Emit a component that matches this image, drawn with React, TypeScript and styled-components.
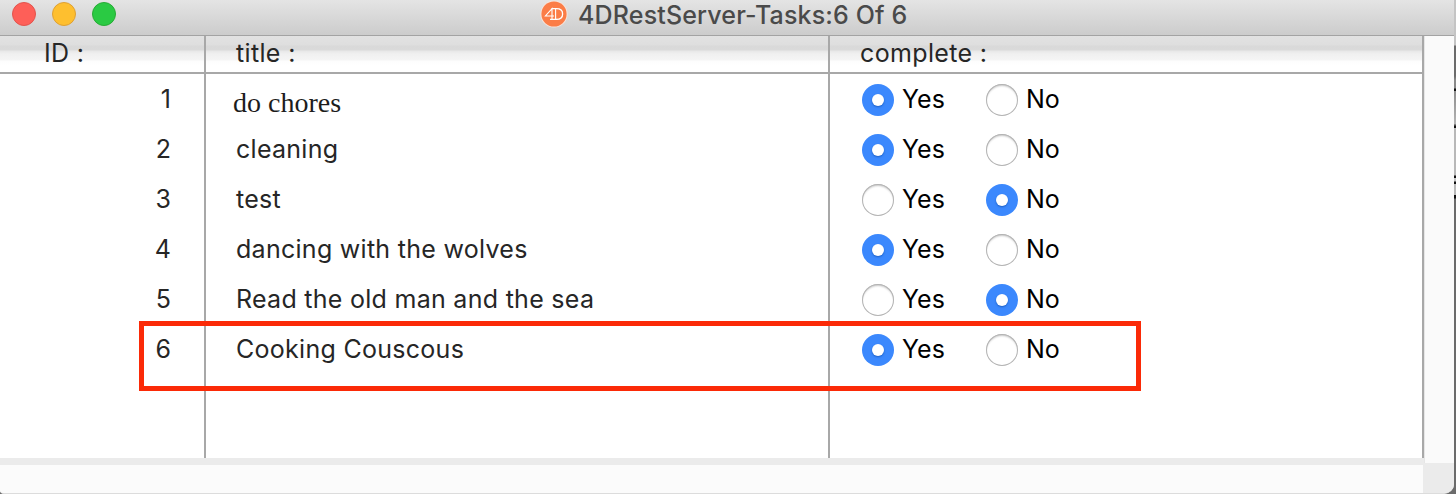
import React from "react";
import styled, { createGlobalStyle, css } from "styled-components";

const GlobalStyle = createGlobalStyle`
  *, *::before, *::after { box-sizing: border-box; }
  body { margin: 0; background: #6f6f6f; overflow: hidden; }
`;

const Desktop = styled.div`
  width: 1456px;
  height: 494px;
  padding-right: 2px;
  overflow: hidden;
  background: linear-gradient(
    #c4c4c4 0 45px, #6b6b6b 46px 76px, #8a8a8a 80px 88px, #111 89px 91px,
    #8d8d8d 91px, #b4b4b4 124px, #444 125px 126px, #111 126px 128px, #b8b8b8 128px 175px,
    #111 176px 178px, #c4c4c4 178px 181px, #111 182px 184px, #b8b8b8 184px 195px,
    #111 195px 198px, #6b6b6b 199px
  );
`;

const Window = styled.main`
  position: relative;
  display: flex;
  flex-direction: column;
  height: 494px;
  border-bottom: 1px solid #dcdcdc;
  border-radius: 0 0 10px 4px;
  overflow: hidden;
  background: #fff;
  color: #262626;
  font: 400 25px/48px Inter, "Liberation Sans", sans-serif;
  white-space: nowrap;
`;

const TitleBar = styled.header`
  position: relative;
  flex: none;
  display: flex;
  justify-content: center;
  height: 36px;
  border-bottom: 1px solid #a3a3a3;
  background: linear-gradient(#e4e4e4, #cccccc);
`;

const WindowControls = styled.div`
  position: absolute;
  left: 12px;
  top: 2px;
  display: flex;
  gap: 16px;
`;

const Control = styled.span<{ $fill: string; $edge: string }>`
  width: 24px;
  height: 24px;
  border: 1px solid ${(p) => p.$edge};
  border-radius: 50%;
  background: ${(p) => p.$fill};
`;

const Title = styled.h1`
  display: flex;
  gap: 10px;
  width: 374px;
  height: 30px;
  margin: 0;
  color: #4a4a4a;
  font-size: 25px;
  font-weight: 500;
  line-height: 30px;
  letter-spacing: 0.16px;
`;

const AppLogo = styled.svg`
  flex: none;
  width: 28px;
  height: 28px;
`;

const Content = styled.div`
  flex: none;
  display: flex;
  height: 427px;
`;

const Main = styled.div`
  width: 1424px;
  background: #ebebeb;
`;

const List = styled.section`
  display: flex;
  height: 422px;
  background: #fff;
`;

const Column = styled.div<{ $width: number }>`
  width: ${(p) => p.$width}px;
  border-right: 2px solid #a8a8a8;
`;

const ColumnHeader = styled.div<{ $indent: number }>`
  height: 38px;
  margin-bottom: 1px;
  padding-left: ${(p) => p.$indent}px;
  border-bottom: 2px solid #a8a8a8;
  background: linear-gradient(
    #e2e2e2 0, #dedede 9px, #d9d9d9 10px, #dadada 14px, #e8e8e8 15px,
    #f0f0f0 18px, #f5f5f5 24px, #fdfdfd 25px, #fff 30px
  );
  line-height: 35px;
  letter-spacing: 0.35px;
`;

const IdCell = styled.div`
  height: 50px;
  padding-right: 33px;
  text-align: right;
`;

const TitleCell = styled.div<{ $serif?: boolean }>`
  height: 50px;
  padding-left: 30px;
  letter-spacing: 0.28px;
  ${(p) =>
    p.$serif &&
    css`
      padding-left: 27px;
      color: #1c1c1c;
      font-family: "Liberation Serif", serif;
      font-size: 28px;
      line-height: 55px;
      letter-spacing: 0;
    `}
`;

const RadioCell = styled.div`
  display: flex;
  height: 50px;
  padding-left: 32px;
  color: #000;
`;

const Option = styled.label`
  display: flex;
  gap: 8px;
  width: 124px;
`;

const Dot = styled.span<{ $on: boolean }>`
  display: grid;
  place-items: center;
  width: 32px;
  height: 32px;
  margin-top: 9px;
  border-radius: 50%;
  background: #fff;
  box-shadow: inset 0 0 0 1px #b4b4b4, inset 0 2px 2px #c8c8c8;
  ${(p) =>
    p.$on &&
    css`
      background: #3b88fd;
      box-shadow: none;
      &::after {
        content: "";
        width: 12px;
        height: 12px;
        border-radius: 50%;
        background: #fff;
        box-shadow: 0 1px 2px #1d5fc4;
      }
    `}
`;

const VerticalScroller = styled.div`
  width: 30px;
  border-left: 1px solid #e6e6e6;
  background: #fafafa;
`;

const BottomBar = styled.div`
  flex: 1;
  display: flex;
  padding-top: 2px;
  background: #ebebeb;
`;

const HorizontalScroller = styled.div`
  width: 1423px;
  background: #fbfbfb;
`;

const Highlight = styled.div`
  position: absolute;
  left: 139px;
  top: 321px;
  width: 1002px;
  height: 70px;
  border: 5px solid #fb2a07;
`;

const tasks = [
  { id: 1, title: "do chores", complete: true, serif: true },
  { id: 2, title: "cleaning", complete: true },
  { id: 3, title: "test", complete: false },
  { id: 4, title: "dancing with the wolves", complete: true },
  { id: 5, title: "Read the old man and the sea", complete: false },
  { id: 6, title: "Cooking Couscous", complete: true },
];

export default function App() {
  return (
    <Desktop>
      <GlobalStyle />
      <Window>
        <TitleBar>
          <WindowControls>
            <Control $fill="#fe5f58" $edge="#e2544d" />
            <Control $fill="#febf2f" $edge="#dea034" />
            <Control $fill="#2aca43" $edge="#27ab35" />
          </WindowControls>
          <Title>
            <AppLogo viewBox="0 0 28 28">
              <circle cx="14" cy="14" r="13.6" fill="#f7e5dc" />
              <circle cx="14" cy="14" r="12.6" fill="#fb7d47" />
              <g fill="none" stroke="#fff">
                <path d="M12 19.4V8.6L5.4 16H14M10 19.4H17" strokeWidth="1.1" />
                <path d="M11.6 8.7H16.5C20.4 8.7 22.6 11 22.6 14C22.6 17.2 20.4 19.4 16.5 19.4" strokeWidth="1.3" />
                <path d="M15.6 9V19.2" strokeWidth="1.1" />
              </g>
            </AppLogo>
            <span>4DRestServer-Tasks:6 Of 6</span>
          </Title>
        </TitleBar>
        <Content>
          <Main>
            <List>
              <Column $width={206}>
                <ColumnHeader $indent={44}>ID :</ColumnHeader>
                {tasks.map((t) => (
                  <IdCell key={t.id}>{t.id}</IdCell>
                ))}
              </Column>
              <Column $width={624}>
                <ColumnHeader $indent={30}>title :</ColumnHeader>
                {tasks.map((t) => (
                  <TitleCell key={t.id} $serif={t.serif}>
                    {t.title}
                  </TitleCell>
                ))}
              </Column>
              <Column $width={594}>
                <ColumnHeader $indent={30}>complete :</ColumnHeader>
                {tasks.map((t) => (
                  <RadioCell key={t.id}>
                    <Option>
                      <Dot $on={t.complete} />
                      Yes
                    </Option>
                    <Option>
                      <Dot $on={!t.complete} />
                      No
                    </Option>
                  </RadioCell>
                ))}
              </Column>
            </List>
          </Main>
          <VerticalScroller />
        </Content>
        <BottomBar>
          <HorizontalScroller />
        </BottomBar>
        <Highlight />
      </Window>
    </Desktop>
  );
}
